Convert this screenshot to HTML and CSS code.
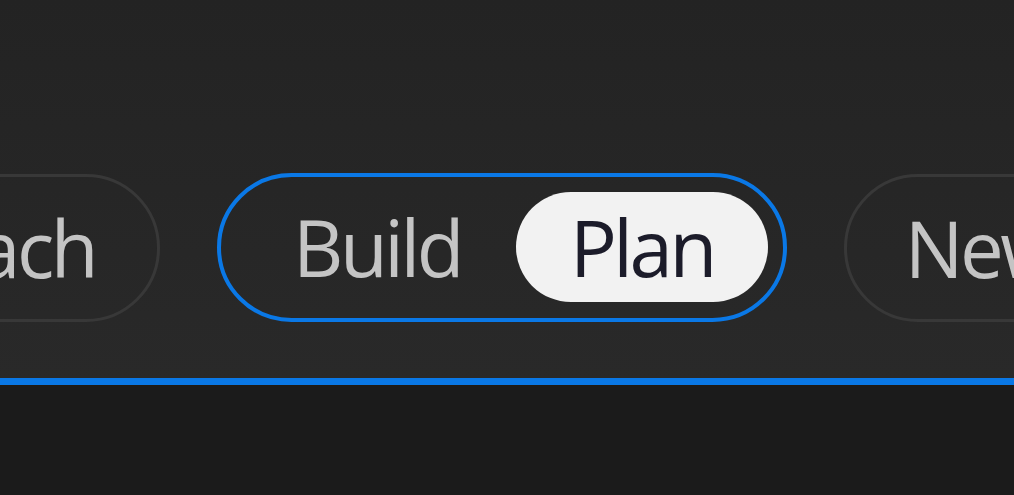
FILE: index.html
```html
<!DOCTYPE html>
<html>
<head>
<meta charset="utf-8">
<link rel="stylesheet" href="styles.css">
</head>
<body>
<div class="toolbar">
  <div class="tabs">
    <div class="pill pill-left">Approach</div>
    <div class="segmented">
      <div class="seg seg-build">Build</div>
      <div class="seg seg-active">Plan</div>
    </div>
    <div class="pill pill-right">New</div>
  </div>
</div>
<div class="accent"></div>
<div class="content"></div>
</body>
</html>
```
FILE: styles.css
```css
html, body {
  margin: 0;
  padding: 0;
  width: 1014px;
  height: 495px;
  overflow: hidden;
  background: #1b1b1b;
  font-family: "Open Sans", "Noto Sans", sans-serif;
}
.toolbar {
  height: 378px;
  background: linear-gradient(#232323, #292929);
  overflow: hidden;
  display: flex;
  align-items: flex-start;
}
.tabs {
  display: flex;
  align-items: center;
  gap: 57px;
  margin-top: 173px;
  white-space: nowrap;
}
.pill {
  box-sizing: border-box;
  height: 148px;
  border: 3px solid #383838;
  border-radius: 74px;
  padding: 0 62px;
  display: flex;
  align-items: center;
  color: #c4c4c4;
  font-size: 78px;
  letter-spacing: -3.5px;
  flex-shrink: 0;
}
.pill-left {
  margin-left: -294px;
}
.pill-right {
  padding-left: 58px;
}
.segmented {
  box-sizing: border-box;
  height: 149px;
  border: 4px solid #0a78e6;
  border-radius: 75px;
  padding: 15px;
  display: flex;
  gap: 4px;
  flex-shrink: 0;
}
.seg {
  height: 110px;
  border-radius: 55px;
  padding: 0 54px;
  display: flex;
  align-items: center;
  color: #c4c4c4;
  font-size: 78px;
  letter-spacing: -3.5px;
}
.seg-build {
  padding: 0 51px 0 57px;
}
.seg-active {
  background: #f2f2f2;
  color: #1c1c2a;
}
.accent {
  height: 7px;
  background: #0a78e6;
  border-bottom: 1px solid #1f1a14;
}
.content {
  height: 109px;
  background: #1b1b1b;
}
```
